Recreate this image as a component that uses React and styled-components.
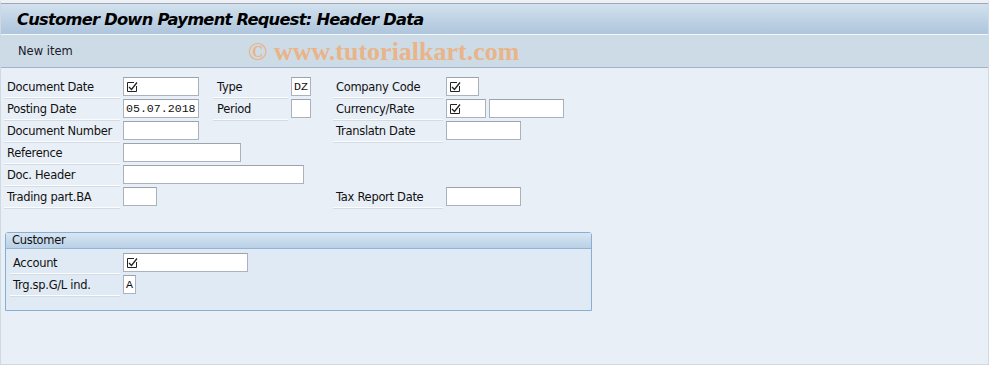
import React from 'react';
import styled, { createGlobalStyle } from 'styled-components';

const GlobalStyle = createGlobalStyle`
  html, body {
    margin: 0;
    padding: 0;
    background: #e9eff7;
  }
  body {
    font-family: Tahoma, "DejaVu Sans", "Liberation Sans", sans-serif;
  }
`;

const Screen = styled.div`
  width: 989px;
  height: 365px;
  box-sizing: border-box;
  border: 1px solid #d0d8e2;
  border-top: 3px solid #eef0f4;
  background: #e9eff7;
  display: flex;
  flex-direction: column;
  overflow: hidden;
`;

const TitleBar = styled.div`
  height: 30px;
  border-top: 1px solid #9aa8b9;
  border-bottom: 1px solid #f4f8fc;
  background: linear-gradient(#d2e1ee, #aec5dc);
  display: flex;
  align-items: center;
  padding-left: 16px;
`;

const Title = styled.h1`
  margin: 0;
  font-family: "DejaVu Sans", sans-serif;
  font-size: 16.3px;
  font-weight: bold;
  font-style: italic;
  letter-spacing: -0.75px;
  color: #000;
`;

const Toolbar = styled.div`
  height: 32px;
  background: #cddbe7;
  border-bottom: 1px solid #a3b3c6;
  display: flex;
  align-items: center;
  padding-left: 17px;
  position: relative;
`;

const ToolButton = styled.span`
  font-family: "DejaVu Sans", sans-serif;
  font-size: 11.5px;
  color: #1a1a2a;
`;

const Watermark = styled.span`
  position: absolute;
  left: 247px;
  top: 2px;
  font-family: "Liberation Serif", serif;
  font-weight: bold;
  font-size: 26px;
  color: #e9b488;
`;

const Body = styled.div`
  padding: 9px 0 0 3px;
`;

const FormGrid = styled.div`
  display: grid;
  grid-template-columns: 119px 90px 78px 42px 113px 1fr;
  grid-auto-rows: 22px;
`;

const Label = styled.div`
  grid-column: ${p => p.col || 'auto'};
  margin-right: 3px;
  border-bottom: 1px solid #fbfcfe;
  box-shadow: 0 1px 0 #d3dbe5;
  height: 20px;
  display: flex;
  align-items: center;
  padding-left: ${p => p.indent || 3}px;
  font-family: "DejaVu Sans", sans-serif;
  font-size: 11.5px;
  letter-spacing: -0.3px;
  color: #111;
  white-space: nowrap;
`;

const Cell = styled.div`
  grid-column: ${p => p.col || 'auto'};
  display: flex;
  gap: 3px;
  align-items: flex-start;
`;

const Input = styled.div`
  width: ${p => p.w}px;
  height: 19px;
  box-sizing: border-box;
  background: #fff;
  border: 1px solid #a9b2bd;
  border-top-color: #9aa3ae;
  display: flex;
  align-items: center;
  padding-left: 2px;
  font-family: "Liberation Mono", monospace;
  font-size: 11.6px;
  color: #111;
  overflow: hidden;
  white-space: nowrap;
`;

const Check = () => (
  <svg width="12" height="12" viewBox="0 0 12 12">
    <path d="M8 1.5 H1.5 V10.5 H10.5 V5" fill="none" stroke="#222" />
    <path d="M3 6 L5.5 8.5 L11 1.5" fill="none" stroke="#222" strokeWidth="1.3" />
  </svg>
);

const Group = styled.div`
  margin: 23px 0 0 1px;
  width: 587px;
  height: 79px;
  box-sizing: border-box;
  border: 1px solid #8aaed1;
  border-radius: 3px 3px 0 0;
  background: #dfeaf4;
`;

const GroupHeader = styled.div`
  height: 15px;
  background: linear-gradient(#d8e6f3, #b9d0e6);
  border-bottom: 1px solid #93b3d2;
  padding-left: 6px;
  font-family: "DejaVu Sans", sans-serif;
  font-size: 11.5px;
  letter-spacing: -0.3px;
  line-height: 15px;
  color: #111;
`;

const GroupGrid = styled.div`
  display: grid;
  grid-template-columns: 113px 1fr;
  grid-auto-rows: 22px;
  padding: 4px 0 0 4px;
`;

export default function App() {
  return (
    <>
      <GlobalStyle />
      <Screen>
        <TitleBar>
          <Title>Customer Down Payment Request: Header Data</Title>
        </TitleBar>
        <Toolbar>
          <ToolButton>New item</ToolButton>
          <Watermark>© www.tutorialkart.com</Watermark>
        </Toolbar>
        <Body>
          <FormGrid>
            <Label col="1">Document Date</Label>
            <Cell col="2"><Input w={76}><Check /></Input></Cell>
            <Label col="3" indent={4}>Type</Label>
            <Cell col="4"><Input w={20}>DZ</Input></Cell>
            <Label col="5">Company Code</Label>
            <Cell col="6"><Input w={33}><Check /></Input></Cell>

            <Label col="1">Posting Date</Label>
            <Cell col="2"><Input w={76}>05.07.2018</Input></Cell>
            <Label col="3" indent={4}>Period</Label>
            <Cell col="4"><Input w={20} /></Cell>
            <Label col="5">Currency/Rate</Label>
            <Cell col="6"><Input w={40}><Check /></Input><Input w={75} /></Cell>

            <Label col="1">Document Number</Label>
            <Cell col="2"><Input w={76} /></Cell>
            <Label col="5">Translatn Date</Label>
            <Cell col="6"><Input w={75} /></Cell>

            <Label col="1">Reference</Label>
            <Cell col="2 / span 3"><Input w={118} /></Cell>

            <Label col="1">Doc. Header</Label>
            <Cell col="2 / span 3"><Input w={181} /></Cell>

            <Label col="1">Trading part.BA</Label>
            <Cell col="2"><Input w={34} /></Cell>
            <Label col="5">Tax Report Date</Label>
            <Cell col="6"><Input w={75} /></Cell>
          </FormGrid>

          <Group>
            <GroupHeader>Customer</GroupHeader>
            <GroupGrid>
              <Label>Account</Label>
              <Cell><Input w={125}><Check /></Input></Cell>
              <Label>Trg.sp.G/L ind.</Label>
              <Cell><Input w={13}>A</Input></Cell>
            </GroupGrid>
          </Group>
        </Body>
      </Screen>
    </>
  );
}
